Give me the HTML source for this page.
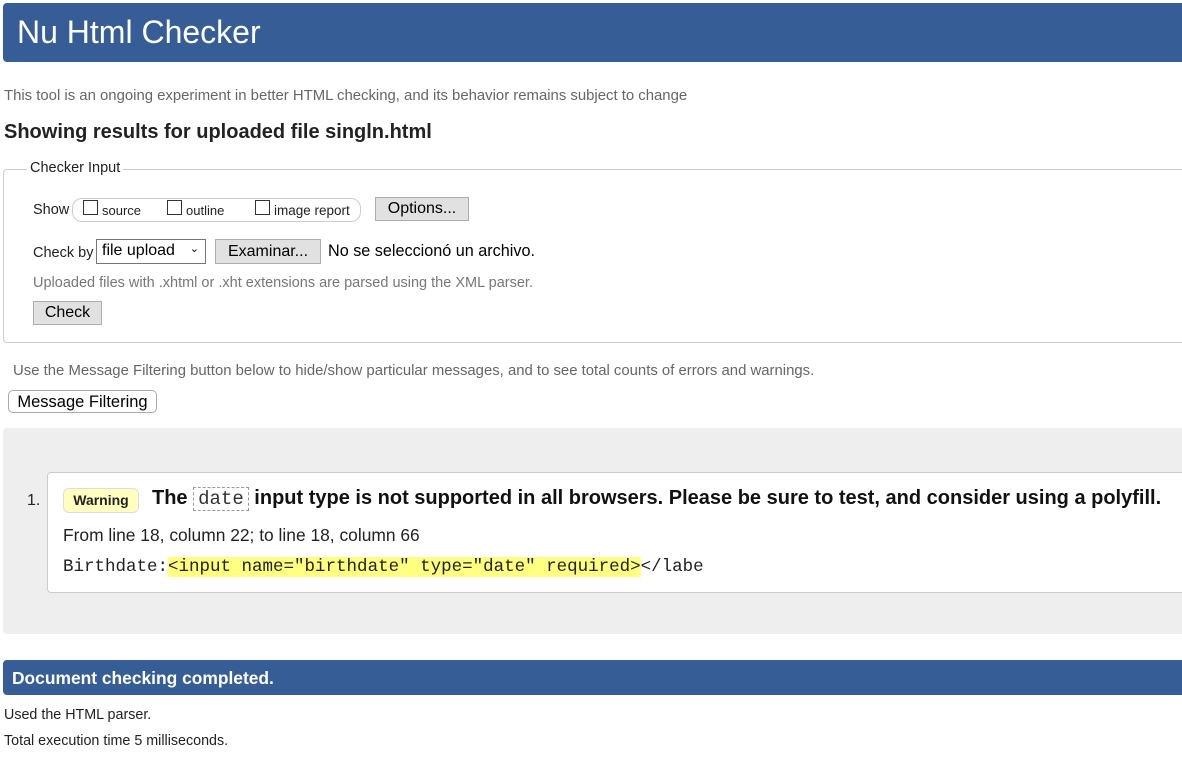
<!DOCTYPE html>
<html><head><meta charset="utf-8"><style>
*{box-sizing:border-box}
body{margin:0;width:1182px;height:757px;overflow:hidden;background:#fff;font-family:"Liberation Sans",Arial,sans-serif;color:#000;position:relative}
.a{position:absolute;white-space:nowrap}
.btn{position:absolute;background:#e1e1e1;border:1px solid #adadad;font-size:16px;text-align:center}
.cb{position:absolute;width:15px;height:15px;border:1px solid #333;background:#fff}
</style></head><body>
<div class="a" style="left:3px;top:3px;width:1179px;height:59px;background:#365d95;border-radius:4px 0 0 4px"></div>
<div class="a" style="left:17px;top:14px;font-size:32px;color:#fff">Nu Html Checker</div>
<div class="a" style="left:4px;top:88px;font-size:14.9px;color:#666">This tool is an ongoing experiment in better HTML checking, and its behavior remains subject to change</div>
<div class="a" style="left:4px;top:121px;font-size:20px;font-weight:bold;color:#222">Showing results for uploaded file singln.html</div>
<div class="a" style="left:3px;top:169px;width:1185px;height:174px;border:1px solid #ccc;border-radius:4px"></div>
<div class="a" style="left:27px;top:160px;font-size:14.5px;background:#fff;padding:0 3px;color:#222">Checker Input</div>
<div class="a" style="left:33px;top:202px;font-size:14.5px;color:#222">Show</div>
<div class="a" style="left:72px;top:198px;width:289px;height:24px;border:1px solid #ccc;border-radius:10px"></div>
<div class="cb" style="left:83px;top:200px"></div><div class="a" style="left:102px;top:203px;font-size:13px;color:#222">source</div>
<div class="cb" style="left:167px;top:200px"></div><div class="a" style="left:186px;top:203px;font-size:13px;color:#222">outline</div>
<div class="cb" style="left:255px;top:200px"></div><div class="a" style="left:274px;top:203px;font-size:13.5px;color:#222">image report</div>
<div class="btn" style="left:375px;top:197px;width:94px;height:24px;line-height:22px">Options...</div>
<div class="a" style="left:33px;top:245px;font-size:14.5px;color:#222">Check by</div>
<div class="a" style="left:96px;top:239px;width:110px;height:25px;border:1px solid #767676;font-size:16px;padding:2px 5px">file upload<span style="position:absolute;right:6px;top:2px;font-size:11px">&#8964;</span></div>
<div class="btn" style="left:215px;top:239px;width:106px;height:25px;line-height:23px">Examinar...</div>
<div class="a" style="left:328px;top:242px;font-size:16.2px">No se seleccionó un archivo.</div>
<div class="a" style="left:33px;top:275px;font-size:14.5px;color:#777">Uploaded files with .xhtml or .xht extensions are parsed using the XML parser.</div>
<div class="btn" style="left:33px;top:301px;width:69px;height:24px;line-height:22px">Check</div>
<div class="a" style="left:13px;top:363px;font-size:14.9px;color:#666">Use the Message Filtering button below to hide/show particular messages, and to see total counts of errors and warnings.</div>
<div class="a" style="left:8px;top:390px;width:149px;height:23px;border:1px solid #aaa;border-radius:5px;font-size:16.5px;line-height:22px;text-align:center;background:#fff">Message Filtering</div>
<div class="a" style="left:3px;top:428px;width:1180px;height:206px;background:#eee;border-radius:4px 0 0 4px"></div>
<div class="a" style="left:47px;top:472px;width:1140px;height:121px;background:#fff;border:1px solid #ccc;border-radius:4px"></div>
<div class="a" style="left:27px;top:492px;font-size:16px;color:#222">1.</div>
<div class="a" style="left:63px;top:488px;width:76px;height:25px;background:#ffffbf;border:1px solid #ddd;border-radius:6px;font-size:14px;font-weight:bold;line-height:23px;text-align:center;color:#222">Warning</div>
<div class="a" style="left:152px;top:487px;font-size:20px;font-weight:bold;color:#111">The <span style="font-family:'Liberation Mono',monospace;font-weight:normal;font-size:19px;border:1px dashed #999;padding:0 4px;color:#333">date</span> input type is not supported in all browsers. Please be sure to test, and consider using a polyfill.</div>
<div class="a" style="left:63px;top:525px;font-size:17.4px;color:#222">From line 18, column 22; to line 18, column 66</div>
<div class="a" style="left:63px;top:557px;font-size:17.5px;font-family:'Liberation Mono',monospace;color:#222">Birthdate:<span style="background:#ffff80">&lt;input name="birthdate" type="date" required&gt;</span>&lt;/labe</div>
<div class="a" style="left:3px;top:660px;width:1180px;height:35px;background:#365d95;border-radius:4px 0 0 4px"></div>
<div class="a" style="left:12px;top:668px;font-size:17.4px;font-weight:bold;color:#fff">Document checking completed.</div>
<div class="a" style="left:4px;top:707px;font-size:14.3px;color:#222">Used the HTML parser.</div>
<div class="a" style="left:4px;top:733px;font-size:14.3px;color:#222">Total execution time 5 milliseconds.</div>
</body></html>
